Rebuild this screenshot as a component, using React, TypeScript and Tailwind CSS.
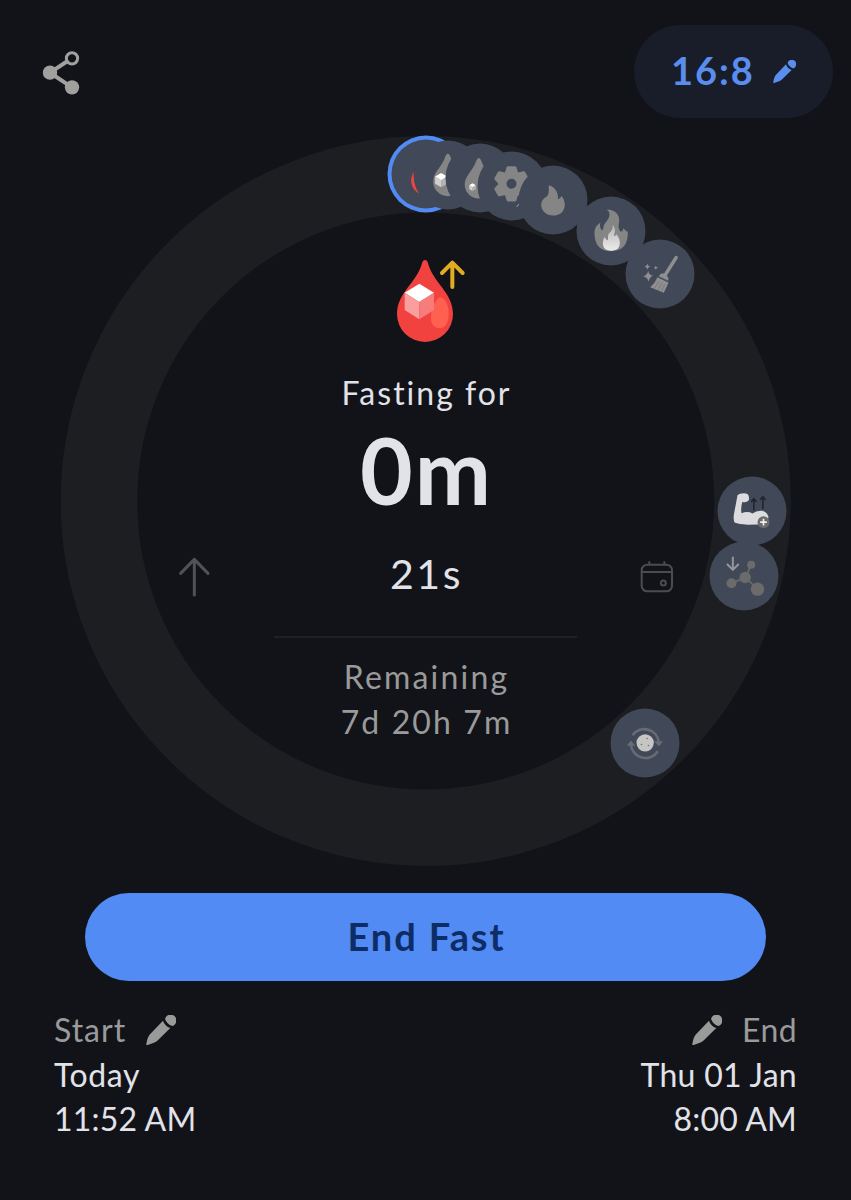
import type { ReactNode } from "react";

type StageMarker = {
  key: string;
  x: number;
  y: number;
  active?: boolean;
  icon: ReactNode;
};

const DROP_PATH =
  "M103 40 Q108 40 112 52 C120 78 147 96 147 123 A44 44 0 0 1 59 123 C59 96 86 78 94 52 Q98 40 103 40Z";

function Cube({ x, y, size }: { x: number; y: number; size: number }) {
  return (
    <g transform={`translate(${x} ${y}) scale(${size})`}>
      <path d="M0 -10 L8.5 -5 L0 0 L-8.5 -5Z" fill="#fff" />
      <path d="M-8.5 -5 L0 0 V10 L-8.5 5Z" fill="#cfcfcf" />
      <path d="M8.5 -5 L0 0 V10 L8.5 5Z" fill="#b4b4b4" />
    </g>
  );
}

const GEAR_ANGLES = [0, 60, 120, 180, 240, 300];

// Marker centres are measured from the top left corner of the ring
const markers: StageMarker[] = [
  {
    key: "sugar-rises",
    x: 365,
    y: 38,
    active: true,
    icon: <path d={DROP_PATH} fill="#ef4444" />,
  },
  {
    key: "sugar-drops",
    x: 387.5,
    y: 38.5,
    icon: (
      <>
        <path d={DROP_PATH} fill="#858585" />
        <Cube x={83} y={119} size={2.15} />
      </>
    ),
  },
  {
    key: "sugar-normal",
    x: 419.5,
    y: 42,
    icon: (
      <>
        <path d={DROP_PATH} fill="#858585" transform="translate(1 5) scale(0.96)" />
        <Cube x={81} y={131} size={1.15} />
      </>
    ),
  },
  {
    key: "metabolism",
    x: 451,
    y: 49.5,
    icon: (
      <>
        <g fill="#858585" stroke="#858585" strokeLinejoin="round" strokeWidth={10}>
          <circle cx={102} cy={97} r={35} />
          {GEAR_ANGLES.map((angle) => (
            <path
              key={angle}
              d="M87 66 L92 49 H112 L117 66Z"
              transform={`rotate(${angle} 102 97)`}
            />
          ))}
        </g>
        <circle cx={102} cy={97} r={15} fill="#414858" />
        <path d="M118 166 L124 158" stroke="#a9a9a9" strokeWidth={3} />
      </>
    ),
  },
  {
    key: "fat-burning",
    x: 492.5,
    y: 63.5,
    icon: (
      <path
        d="M91 59 C110 64 121 82 118 101 Q125 101 129 91 Q139 104 139 116 C139 138 124 150 104 150 C83 150 68 136 68 117 Q68 103 84 94 C93 86 90 74 91 59Z"
        fill="#858585"
      />
    ),
  },
  {
    key: "ketosis",
    x: 550,
    y: 95,
    icon: (
      <>
        <defs>
          <linearGradient id="ketosis-core" x1="0" y1="0" x2="0" y2="1">
            <stop offset="0" stopColor="#b5b5b5" />
            <stop offset="1" stopColor="#ececec" />
          </linearGradient>
        </defs>
        <path
          d="M91 39 C116 39 130 54 128 76 C125 90 126 98 132 106 Q140 104 141 95 Q148 105 154 105 C155 142 140 164 104 164 C70 164 54 144 54 110 C54 94 61 85 72 78 Q68 90 76 102 Q82 100 81 91 C82 79 100 70 99 52 Q97 43 91 39Z"
          fill="#858585"
        />
        <path
          d="M109 85 C119 97 114 111 112 118 Q117 120 120 113 C127 122 130 130 130 139 C130 155 121 162 104 163 C87 162 79 155 79 139 Q79 128 85 121 Q87 130 92 131 C97 130 92 121 97 111 C107 103 109 96 109 85Z"
          fill="url(#ketosis-core)"
        />
      </>
    ),
  },
  {
    key: "autophagy",
    x: 599.5,
    y: 137.5,
    icon: (
      <g fill="#908f8f">
        <path d="M152 54 L120 105" stroke="#908f8f" strokeWidth={10} strokeLinecap="round" />
        <path d="M100 110 Q105 100 113 101 L124 108 Q130 113 128 124Z" />
        <path d="M96 113 L129 130 L115 160 L74 143 Q88 132 96 113Z" />
        <path d="M99 111 L129 127" stroke="#555b68" strokeWidth={2.5} />
        <path
          d="M100 126 L87 146 M109 130 L98 151 M118 134 L108 155"
          stroke="#6b6f78"
          strokeWidth={2}
        />
        <path d="M68 94 Q70 107 83 109 Q71 113 70 127 Q66 113 53 111 Q66 107 68 94Z" />
        <path d="M66 73 Q67 80 74 82 Q67 83 66 90 Q64 83 57 82 Q64 80 66 73Z" />
        <path d="M91 79 Q92 84 97 85 Q92 86 91 91 Q90 86 85 85 Q90 84 91 79Z" />
      </g>
    ),
  },
  {
    key: "growth-hormone",
    x: 691.5,
    y: 375,
    icon: (
      <>
        <path
          d="M60 56 Q66 50 74 51 Q82 49 91 53 Q96 60 94 71 Q87 79 77 77 L75 75 Q69 92 72 110 Q91 103 105 111 Q118 101 134 103 Q148 106 153 121 L150 135 Q144 142 122 144 L90 145 Q64 143 52 139 Q47 133 49 115 Z"
          fill="#dcdcdf"
        />
        <path
          d="M109 102 V68 M101 76 L109 67 L117 76 M136 98 V62 M128 70 L136 61 L144 70"
          fill="none"
          stroke="#22262f"
          strokeWidth={5}
        />
        <circle cx={138} cy={137} r={18} fill="#6b6b6b" />
        <path d="M138 127 V147 M128 137 H148" stroke="#f0f0f0" strokeWidth={5} />
      </>
    ),
  },
  {
    key: "insulin-low",
    x: 683,
    y: 440,
    icon: (
      <>
        <path
          d="M70 48 V84 M54 69 L70 85 L86 69"
          fill="none"
          stroke="#96979c"
          strokeWidth={6}
          strokeLinecap="round"
          strokeLinejoin="round"
        />
        <path d="M125 70 L108 108 L66 125 M108 108 L144 143" fill="none" stroke="#6b6b6b" strokeWidth={5} />
        <g fill="#6b6b6b">
          <circle cx={125} cy={70} r={12} />
          <circle cx={107} cy={108} r={17} />
          <circle cx={66} cy={125} r={15} />
          <circle cx={144} cy={143} r={20} />
        </g>
      </>
    ),
  },
  {
    key: "immune-cells",
    x: 584.5,
    y: 607,
    icon: (
      <>
        <g fill="none" stroke="#676b73" strokeWidth={8}>
          <path d="M66 80 A44 44 0 0 1 145 100" />
          <path d="M142 128 A44 44 0 0 1 61 108" />
        </g>
        <path d="M131 98 H158 L145 114Z M49 112 H75 L61 96Z" fill="#676b73" />
        <circle cx={104} cy={103} r={26} fill="#c5c5c3" />
        <g fill="#77736c">
          <circle cx={110} cy={90} r={2.5} />
          <circle cx={93} cy={108} r={2.5} />
          <circle cx={114} cy={111} r={2.5} />
        </g>
      </>
    ),
  },
];

function Pencil({ className }: { className: string }) {
  return (
    <svg viewBox="0 0 90 90" fill="currentColor" className={className}>
      <path d="M51 17 Q56 33 73 39 L34 77 Q28 82 5 90 Q0 91 1 86 Q5 65 12 58Z" />
      <path d="M57 11 A17.5 17.5 0 1 1 79 33 Q62 28 57 11Z" />
    </svg>
  );
}

function ShareIcon() {
  return (
    <svg viewBox="66 60 114 138" className="mt-0.5 h-[46px] w-[38px] text-[#a0a09f]">
      <path d="M143 93 L90 128 L156 172" fill="none" stroke="currentColor" strokeWidth={12} />
      <circle cx={156} cy={85} r={17} fill="none" stroke="currentColor" strokeWidth={9} />
      <circle cx={90} cy={128} r={21.5} fill="currentColor" />
      <circle cx={156} cy={172} r={21.5} fill="currentColor" />
    </svg>
  );
}

function BloodSugarIcon() {
  return (
    <svg viewBox="46 48 243 264" className="h-[88px] w-[81px]">
      <path
        d="M166 60 Q172 60 175 70 C190 128 250 158 250 222 A84 84 0 0 1 82 222 C82 158 142 128 157 70 Q160 60 166 60Z"
        fill="#f2423f"
      />
      <path d="M211 171 C230 178 237 198 237 222 C237 248 226 265 210 265 C194 265 184 254 184 235 C184 210 193 182 211 171Z" fill="#ff604f" />
      <path d="M149 131 L193 158 L149 186 L105 158Z" fill="#fff" />
      <path d="M105 158 L149 186 V238 L105 210Z" fill="#fa9f9f" />
      <path d="M193 158 L149 186 V238 L193 210Z" fill="#f77c7c" />
      <path
        d="M248 141 V69 M217 99 L248 68 L279 99"
        fill="none"
        stroke="#e0ac21"
        strokeWidth={12}
        strokeLinecap="round"
        strokeLinejoin="round"
      />
    </svg>
  );
}

function ArrowUpIcon() {
  return (
    <svg
      viewBox="42 27 120 144"
      fill="none"
      stroke="#515257"
      strokeWidth={9}
      strokeLinecap="round"
      strokeLinejoin="round"
      className="h-12 w-10"
    >
      <path d="M103 162 V55 M62 97 L103 55 L144 97" />
    </svg>
  );
}

function CalendarIcon() {
  return (
    <svg
      viewBox="51 27 120 144"
      fill="none"
      stroke="#4b4c51"
      strokeWidth={6}
      strokeLinecap="round"
      className="h-12 w-10"
    >
      <rect x={65} y={71} width={91} height={80} rx={17} />
      <path d="M66 93 H155 M88 63 V70 M133 63 V70" />
      <circle cx={130} cy={126} r={7.5} />
    </svg>
  );
}

function Marker({ marker }: { marker: StageMarker }) {
  return (
    <div
      className={`absolute h-[69px] w-[69px] -translate-x-1/2 -translate-y-1/2 rounded-full bg-[#414858] ${
        marker.active ? "ring-4 ring-[#518bf3]" : ""
      }`}
      style={{ left: marker.x, top: marker.y }}
    >
      <svg viewBox="0 0 207 207" className="h-full w-full">
        {marker.icon}
      </svg>
    </div>
  );
}

function FastingRing() {
  return (
    <section className="relative mx-auto mt-[18px] h-[730px] w-[730px]">
      <svg viewBox="0 0 730 730" className="absolute inset-0 h-full w-full">
        <circle cx={364.7} cy={365} r={326.75} fill="none" stroke="#1d1e22" strokeWidth={76.5} />
      </svg>

      <div className="relative flex flex-col items-center pt-[120px] text-[#e2e2e9]">
        <BloodSugarIcon />
        <p className="mt-[27px] pl-0.5 text-[32px] leading-[44px] tracking-[2px]">Fasting for</p>
        <p className="mt-[4px] pl-0.5 text-[91px] font-bold leading-[102px] tracking-[2px]">0m</p>

        <div className="mt-[28px] flex w-[503px] items-center justify-between">
          <ArrowUpIcon />
          <p className="pl-0.5 text-[41px] leading-[50px] tracking-[2.6px]">21s</p>
          <CalendarIcon />
        </div>

        <div className="mt-[37px] h-0.5 w-[303px] bg-[#1f2025]" />

        <div className="mt-[16px] pl-0.5 text-center text-[32px] leading-[45px] text-[#9a9a9b]">
          <p className="tracking-[2.2px]">Remaining</p>
          <p className="tracking-[2.1px]">7d 20h 7m</p>
        </div>
      </div>

      {markers.map((marker) => (
        <Marker key={marker.key} marker={marker} />
      ))}
    </section>
  );
}

export default function App() {
  return (
    <main className="flex h-[1200px] w-[851px] flex-col overflow-hidden bg-[#121318] font-['Lato','Noto_Sans',sans-serif]">
      <header className="flex items-center justify-between pl-[42px] pr-[18px] pt-[25px]">
        <ShareIcon />
        <button className="flex h-[93px] w-[199px] items-center rounded-full bg-[#181d29] pl-[37px] text-[#5a8eee]">
          <span className="w-[102px] pb-0.5 text-left text-[38px] font-bold tracking-[2px]">16:8</span>
          <Pencil className="h-[23px] w-[23px]" />
        </button>
      </header>

      <FastingRing />

      <button className="mx-auto mt-[27px] h-[88px] w-[681px] shrink-0 rounded-full bg-[#518bf3] pb-0.5 pl-0.5 text-[38px] font-bold tracking-[1.9px] text-[#0e2d66]">
        End Fast
      </button>

      <footer className="mt-[27px] flex justify-between px-[54px] text-[32px] leading-[44.5px] text-[#e2e2e9]">
        <div>
          <div className="flex items-center gap-5 tracking-[1px] text-[#9a9a9b]">
            <span>Start</span>
            <Pencil className="h-[30px] w-[30px]" />
          </div>
          <p className="tracking-[0.6px]">Today</p>
          <p className="tracking-[0.2px]">11:52 AM</p>
        </div>

        <div className="text-right">
          <div className="flex items-center justify-end gap-5 text-[#9a9a9b]">
            <Pencil className="h-[30px] w-[30px]" />
            <span className="tracking-[0.4px]">End</span>
          </div>
          <p className="tracking-[0.3px]">Thu 01 Jan</p>
          <p className="tracking-[0.2px]">8:00 AM</p>
        </div>
      </footer>
    </main>
  );
}
